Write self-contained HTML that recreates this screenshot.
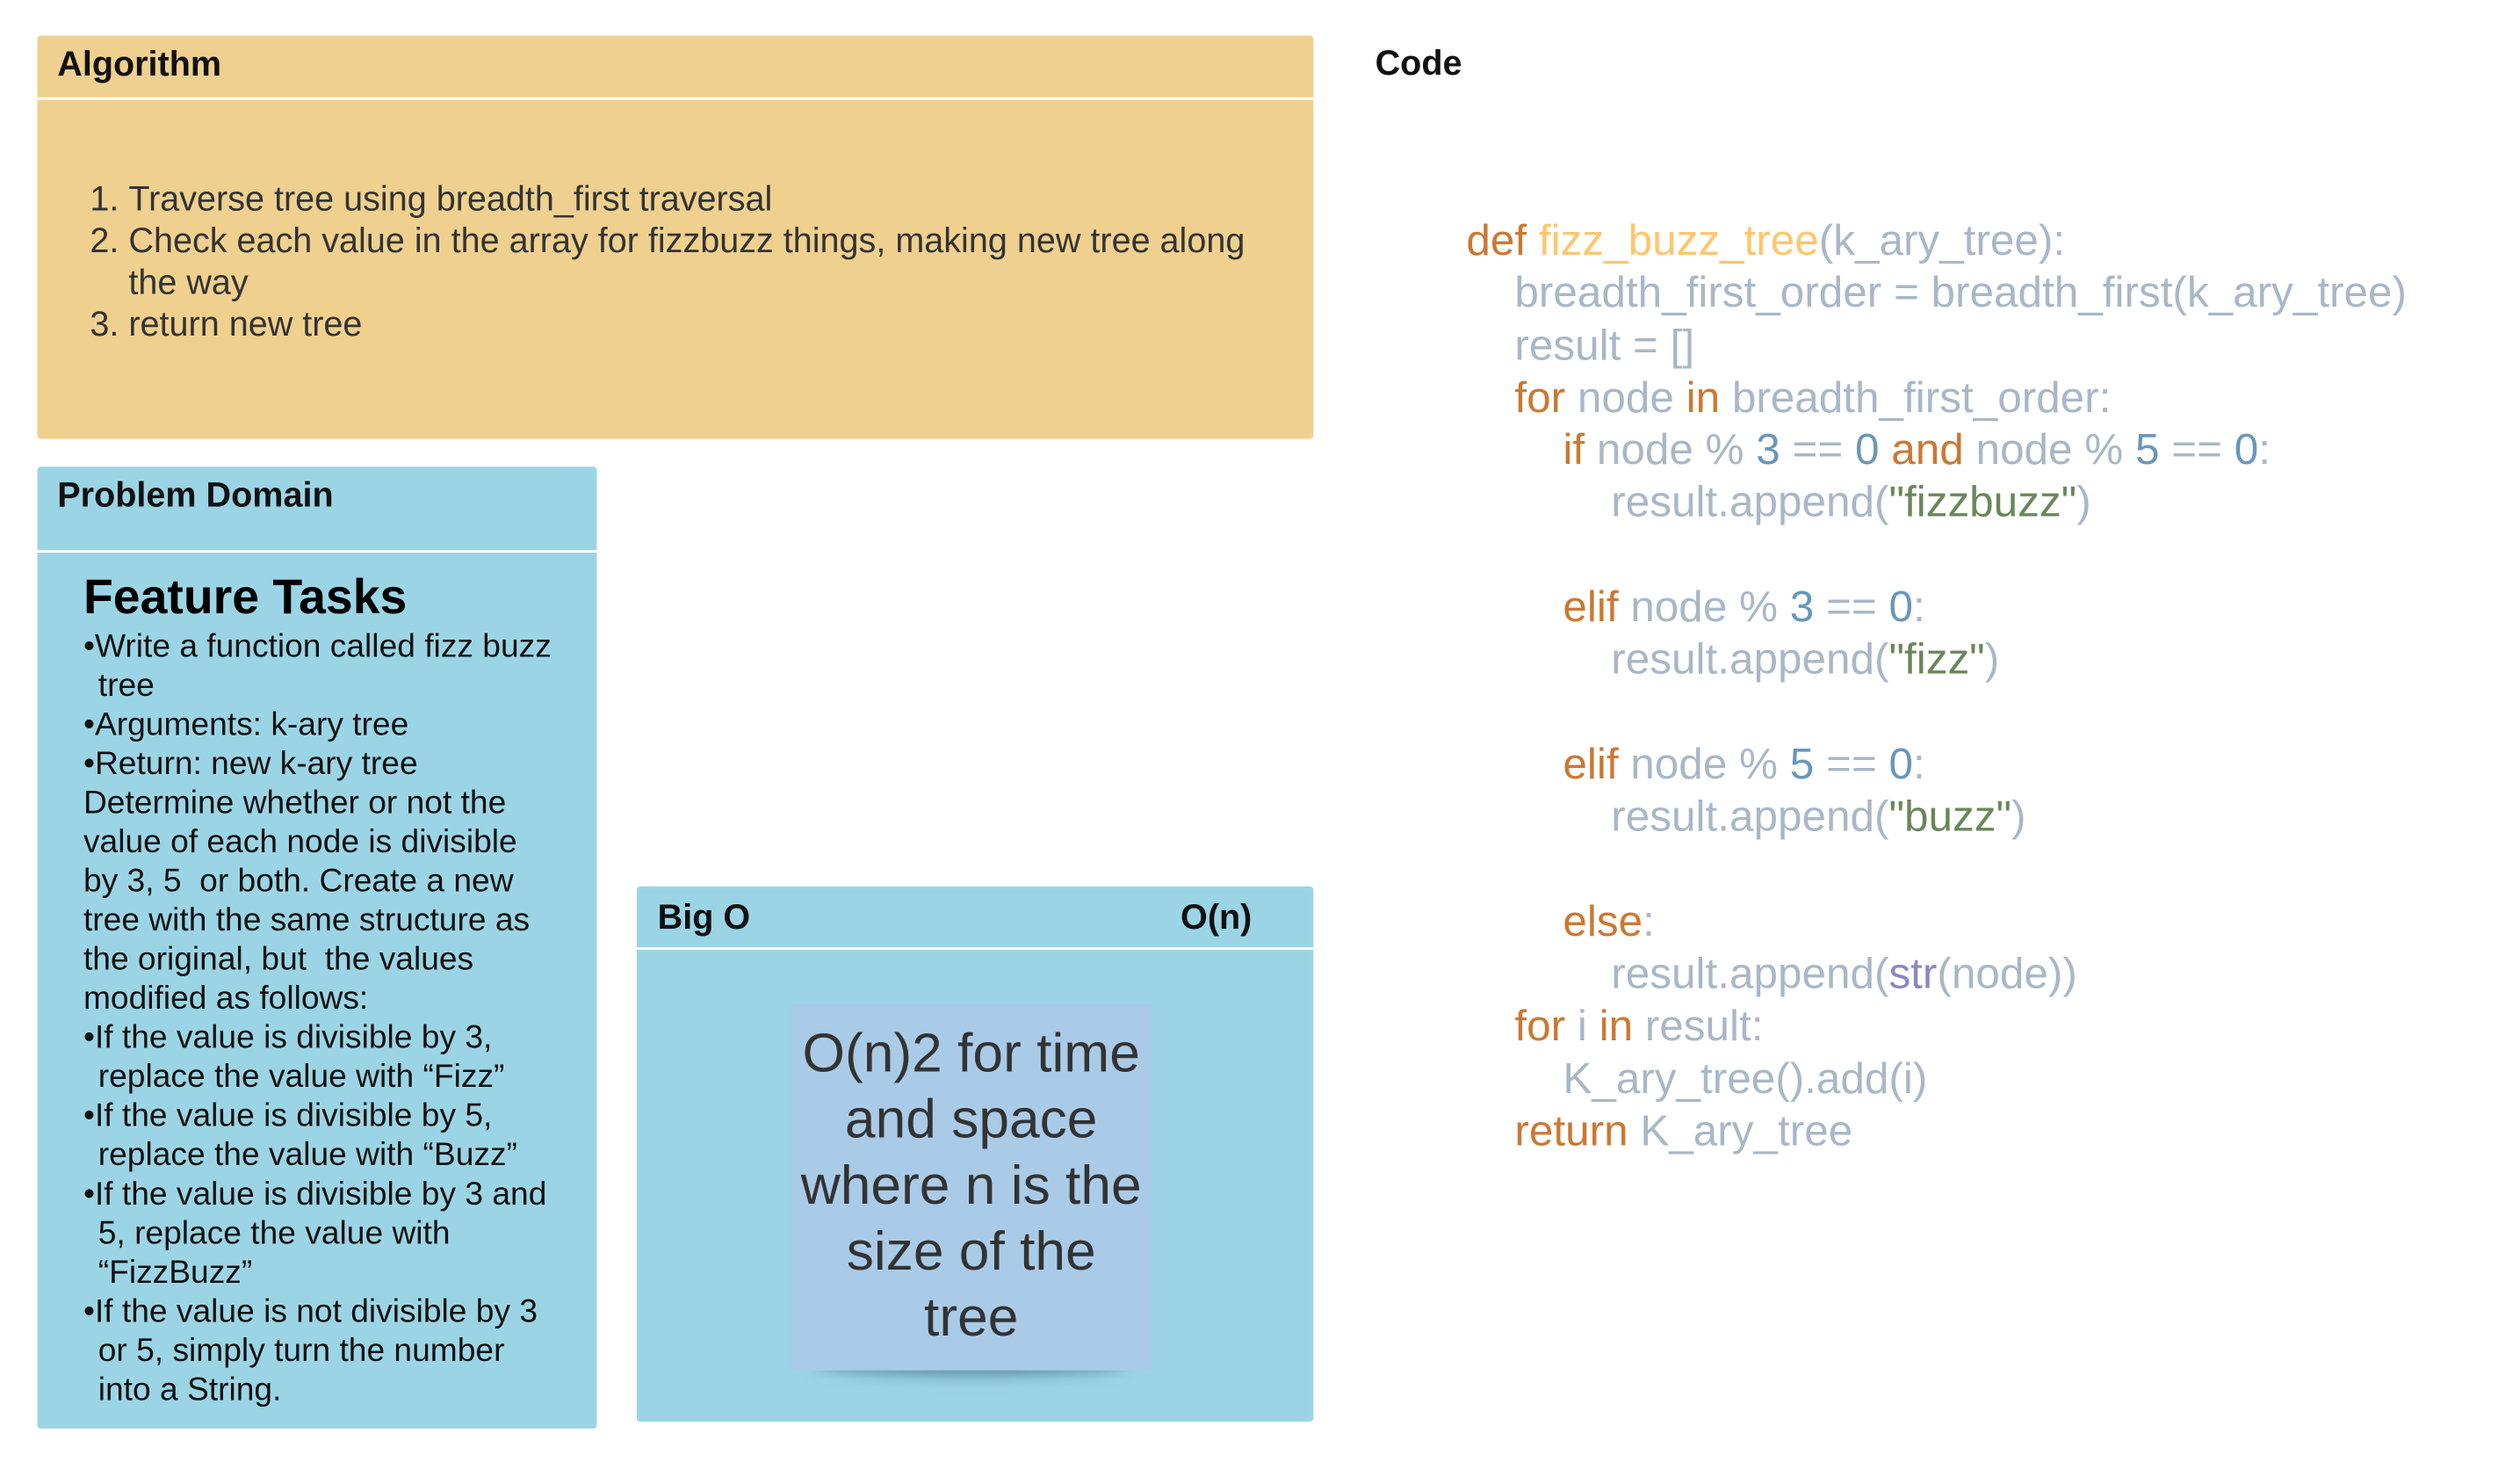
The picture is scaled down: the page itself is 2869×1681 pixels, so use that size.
<!DOCTYPE html>
<html><head><meta charset="utf-8"><style>
*{margin:0;padding:0;box-sizing:border-box}
body{width:2869px;height:1668px;background:#fff;font-family:"Liberation Sans",sans-serif;position:relative;overflow:hidden}
#w{position:absolute;left:0;top:0;width:2900px;height:1700px;transform:scale(0.989);transform-origin:0 0}
.a{position:absolute}
.box{position:absolute;border-radius:4px}
.hd{position:absolute;font-weight:bold;font-size:40px;color:#111}
.line{position:absolute;left:0;right:0;height:3px;background:#fff}
.alg li{font-size:40px;color:#333;line-height:48px}
.pd{font-size:37.6px;color:#111;line-height:45px;white-space:nowrap}
.pd .b{padding-left:17px;text-indent:-17px}
.code{font-size:50px;line-height:60.3px;white-space:pre;color:#a9b7c6}
.k{color:#cc7832}.f{color:#ffc66d}.n{color:#6897bb}.s{color:#6a8759}.p{color:#8888c6}
</style></head><body><div id="w">
<div class="box" style="left:43px;top:41px;width:1469px;height:464px;background:#efd08e">
 <div class="hd" style="left:23px;top:11px">Algorithm</div>
 <div class="line" style="top:71px"></div>
 <ol class="alg a" style="left:64px;top:164px;width:1380px;padding-left:41px">
  <li>Traverse tree using breadth_first traversal</li>
  <li>Check each value in the array for fizzbuzz things, making new tree along the way</li>
  <li>return new tree</li>
 </ol>
</div>
<div class="box" style="left:43px;top:537px;width:644px;height:1107px;background:#9bd5e5">
 <div class="hd" style="left:23px;top:11px">Problem Domain</div>
 <div class="line" style="top:96px"></div>
 <div class="a" style="left:53px;top:117px;font-size:56px;font-weight:bold;color:#000">Feature Tasks</div>
 <div class="a pd" style="left:53px;top:184px">
  <div class="b">•Write a function called fizz buzz<br>tree</div>
  <div class="b">•Arguments: k-ary tree</div>
  <div class="b">•Return: new k-ary tree</div>
  <div>Determine whether or not the<br>value of each node is divisible<br>by 3, 5&nbsp; or both. Create a new<br>tree with the same structure as<br>the original, but&nbsp; the values<br>modified as follows:</div>
  <div class="b">•If the value is divisible by 3,<br>replace the value with “Fizz”</div>
  <div class="b">•If the value is divisible by 5,<br>replace the value with “Buzz”</div>
  <div class="b">•If the value is divisible by 3 and<br>5, replace the value with<br>“FizzBuzz”</div>
  <div class="b">•If the value is not divisible by 3<br>or 5, simply turn the number<br>into a String.</div>
 </div>
</div>
<div class="box" style="left:733px;top:1020px;width:779px;height:616px;background:#9bd5e5">
 <div class="hd" style="left:24px;top:14px">Big O</div>
 <div class="hd" style="left:626px;top:14px">O(n)</div>
 <div class="line" style="top:70px"></div>
 <div class="a" style="left:205px;top:520px;width:360px;height:30px;border-radius:50%;box-shadow:0 12px 18px rgba(40,90,110,0.6)"></div>
 <div class="a" style="left:178px;top:135px;width:414px;height:422px;background:#aacbe8;text-align:center;font-size:63px;line-height:76px;color:#333;padding-top:19px">O(n)2 for time<br>and space<br>where n is the<br>size of the<br>tree</div>
</div>
<div class="hd" style="left:1583px;top:51px">Code</div>
<div class="a code" style="left:1688px;top:246px"><span class="k">def </span><span class="f">fizz_buzz_tree</span>(k_ary_tree):
    breadth_first_order = breadth_first(k_ary_tree)
    result = []
    <span class="k">for</span> node <span class="k">in</span> breadth_first_order:
        <span class="k">if</span> node % <span class="n">3</span> == <span class="n">0</span> <span class="k">and</span> node % <span class="n">5</span> == <span class="n">0</span>:
            result.append(<span class="s">"fizzbuzz"</span>)

        <span class="k">elif</span> node % <span class="n">3</span> == <span class="n">0</span>:
            result.append(<span class="s">"fizz"</span>)

        <span class="k">elif</span> node % <span class="n">5</span> == <span class="n">0</span>:
            result.append(<span class="s">"buzz"</span>)

        <span class="k">else</span>:
            result.append(<span class="p">str</span>(node))
    <span class="k">for</span> i <span class="k">in</span> result:
        K_ary_tree().add(i)
    <span class="k">return</span> K_ary_tree</div>
</div></body></html>
